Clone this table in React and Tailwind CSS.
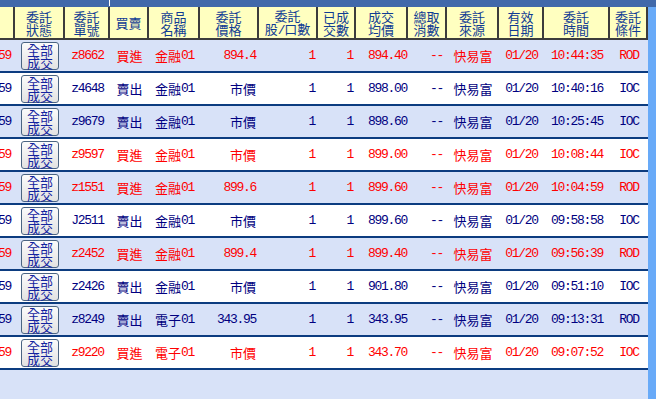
import React from "react";

const COLS = [
  { w: "w-[15px]", key: "t", align: "justify-end pr-[4px]" },
  { w: "w-[50px]", key: "btn", align: "justify-center", h: ["委託", "狀態"] },
  { w: "w-[45px]", key: "no", align: "justify-center", h: ["委託", "單號"] },
  { w: "w-[39px]", key: "bs", align: "justify-center", h: ["買賣"] },
  { w: "w-[51px]", key: "name", align: "justify-center", h: ["商品", "名稱"] },
  { w: "w-[59px]", key: "price", align: "justify-end pr-[3px]", h: ["委託", "價格"] },
  { w: "w-[59px]", key: "qty", align: "justify-end pr-[3px]", h: ["委託", "股/口數"] },
  { w: "w-[38px]", key: "done", align: "justify-end pr-[3px]", h: ["已成", "交數"] },
  { w: "w-[52px]", key: "avg", align: "justify-end pr-[1px]", h: ["成交", "均價"] },
  { w: "w-[39px]", key: "cancel", align: "justify-end pr-[4px]", h: ["總取", "消數"] },
  { w: "w-[52px]", key: "src", align: "justify-center", h: ["委託", "來源"] },
  { w: "w-[45px]", key: "date", align: "justify-center", h: ["有效", "日期"] },
  { w: "w-[66px]", key: "time", align: "justify-center", h: ["委託", "時間"] },
  { w: "w-[38px]", key: "cond", align: "justify-center", h: ["委託", "條件"] },
];

const ROWS = [
  ["z8662", "買進", "金融01", "894.4", "898.40".slice(0, 0) || "894.40", "10:44:35", "ROD"],
  ["z4648", "賣出", "金融01", "市價", "898.00", "10:40:16", "IOC"],
  ["z9679", "賣出", "金融01", "市價", "898.60", "10:25:45", "IOC"],
  ["z9597", "買進", "金融01", "市價", "899.00", "10:08:44", "IOC"],
  ["z1551", "買進", "金融01", "899.6", "899.60", "10:04:59", "ROD"],
  ["J2511", "賣出", "金融01", "市價", "899.60", "09:58:58", "IOC"],
  ["z2452", "買進", "金融01", "899.4", "899.40", "09:56:39", "ROD"],
  ["z2426", "賣出", "金融01", "市價", "901.80", "09:51:10", "IOC"],
  ["z8249", "賣出", "電子01", "343.95", "343.95", "09:13:31", "ROD"],
  ["z9220", "買進", "電子01", "市價", "343.70", "09:07:52", "IOC"],
];

function M({ s }) {
  return s
    .split(/([\x20-\x7e]+)/)
    .filter(Boolean)
    .map((p, i) =>
      /^[\x20-\x7e]+$/.test(p) ? (
        <span key={i} className="font-['Liberation_Mono',monospace] tracking-[-1.3px]">
          {p}
        </span>
      ) : (
        <span key={i}>{p}</span>
      )
    );
}

function Btn() {
  return (
    <div className="w-[38px] h-[28px] rounded-[3px] border border-[#4a6482] bg-gradient-to-b from-[#fbfbfb] to-[#e2e2e2] flex flex-col items-center justify-center text-[13px] leading-[13px] text-[#1424a0]">
      <span>全部</span>
      <span>成交</span>
    </div>
  );
}

export default function App() {
  return (
    <div className="w-[656px] h-[399px] overflow-hidden bg-[#d8e2f8] flex flex-col font-['Noto_Sans_CJK_TC',sans-serif]">
      <div className="h-[7px] bg-[#4169aa] flex shrink-0">
        <div className="w-[109px]" />
        <div className="w-[1px] h-[6px] bg-white" />
      </div>
      <div className="flex flex-1 min-h-0">
        <div className="w-[648px] flex flex-col">
          <div className="h-[33px] flex bg-[#ffffc0] border-b-2 border-[#3c3c3c] shrink-0">
            {COLS.map((c, i) => (
              <div
                key={i}
                className={`${c.w} shrink-0 border-r-2 border-[#3c3c3c] flex flex-col items-center justify-center text-[13px] leading-[13px] text-[#103c94]`}
              >
                {c.h && c.h.map((l, j) => (
                  <span key={j} className="whitespace-nowrap">
                    <M s={l} />
                  </span>
                ))}
              </div>
            ))}
          </div>
          {ROWS.map((r, idx) => {
            const buy = r[1] === "買進";
            const vals = {
              t: "13:45:59",
              no: r[0],
              bs: r[1],
              name: r[2],
              price: r[3],
              qty: "1",
              done: "1",
              avg: r[4],
              cancel: "--",
              src: "快易富",
              date: "01/20",
              time: r[5],
              cond: r[6],
            };
            return (
              <div
                key={idx}
                className={`h-[33px] shrink-0 flex border-b-2 border-[#0c3c80] text-[13px] ${
                  idx % 2 === 0 ? "bg-[#d8e2f8]" : "bg-white"
                } ${buy ? "text-[#ff0000]" : "text-[#000080]"}`}
              >
                {COLS.map((c, i) => (
                  <div
                    key={i}
                    className={`${c.w} shrink-0 flex items-center overflow-hidden whitespace-nowrap ${c.align}`}
                  >
                    {c.key === "btn" ? <Btn /> : <M s={vals[c.key]} />}
                  </div>
                ))}
              </div>
            );
          })}
        </div>
        <div className="w-[8px] bg-[#68aaf8]" />
      </div>
    </div>
  );
}
